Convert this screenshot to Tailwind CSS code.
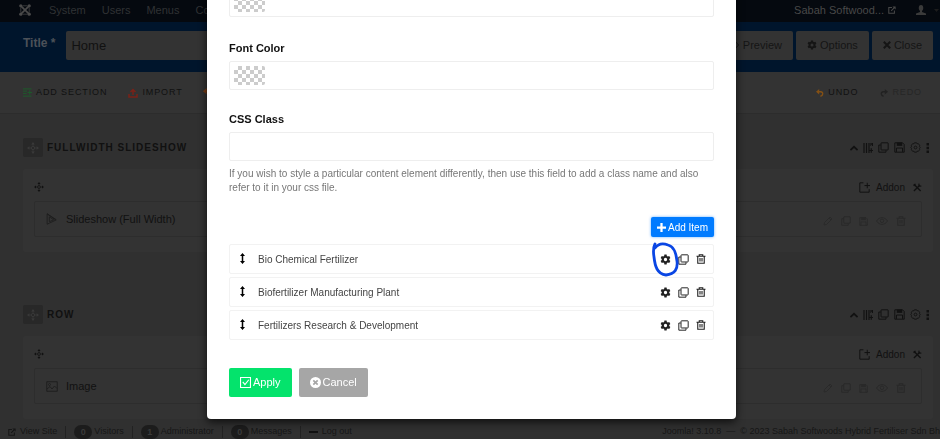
<!DOCTYPE html>
<html lang="en">
  <head>
    <meta charset="UTF-8" />
    <meta name="viewport" content="width=device-width, initial-scale=1.0" />
    <script src="https://cdn.jsdelivr.net/npm/@tailwindcss/browser@4"></script>
    <title>Page Builder - Edit Page</title>
  </head>
  <body
    class="h-screen overflow-hidden bg-[#303030] font-['Liberation_Sans',Arial,sans-serif] text-[10px] text-[#111]"
  >
    <!-- Icons -->
    <svg class="hidden">
      <symbol id="move" viewBox="0 0 20 20">
        <circle cx="10" cy="10" r="2.800" fill="none" stroke="currentColor" stroke-width="1.500" />
        <path stroke="currentColor" stroke-width="1.200" d="M10 7V3M10 17v-4M7 10H3M17 10h-4" />
        <path fill="currentColor" d="M10 0l3 4H7zM10 20l3-4H7zM0 10l4-3v6zM20 10l-4-3v6z" />
      </symbol>
      <symbol id="gear" viewBox="0 0 20 20">
        <path
          fill="currentColor"
          fill-rule="evenodd"
          d="M8 1h4l.5 2.600 1.800 1 2.500-.9 2 3.400-2 1.800v2.200l2 1.800-2 3.400-2.500-.9-1.800 1L12 19H8l-.5-2.600-1.800-1-2.500.9-2-3.400 2-1.800V8.900l-2-1.800 2-3.400 2.500.9 1.800-1zM10 7a3 3 0 100 6 3 3 0 000-6z"
        />
      </symbol>
      <symbol id="gear-line" viewBox="0 0 20 20">
        <g fill="none" stroke="currentColor" stroke-width="1.6">
          <path d="M8 1.500h4l1 1.800 2.200-.3 2.300 3-.3 2 1.300 2-1.300 2 .3 2-2.300 3-2.200-.3-1 1.800H8l-1-1.800-2.200.3-2.300-3 .3-2-1.300-2 1.300-2-.3-2 2.300-3 2.200.3z" />
          <circle cx="10" cy="10" r="2.500" />
        </g>
      </symbol>
      <symbol id="copy" viewBox="0 0 20 20">
        <g fill="none" stroke="currentColor" stroke-width="1.8">
          <rect x="5.500" y="1.500" width="13" height="13" rx="1" />
          <path d="M5 5.500H1.500v13h13V15" />
        </g>
      </symbol>
      <symbol id="trash" viewBox="0 0 20 20">
        <g fill="none" stroke="currentColor" stroke-width="2.200">
          <path d="M1 4.500h18M6.500 4V1.500h7V4M3.500 5v13.500h13V5M8 8v7M12 8v7" />
        </g>
      </symbol>
      <symbol id="save" viewBox="0 0 20 20">
        <path fill="none" stroke="currentColor" stroke-width="1.8" d="M1.500 1.500h14l3 3v14h-17zM4.500 18v-7h11v7" />
        <path fill="currentColor" d="M5 1h10v6H5z" />
      </symbol>
      <symbol id="cols" viewBox="0 0 20 20">
        <path fill="none" stroke="currentColor" stroke-width="2.400" d="M2 0v20M7 0v20M12 0v20M16 0v6M19 0v6M12 15h8M16.500 10.500v9" />
      </symbol>
      <symbol id="up" viewBox="0 0 20 20">
        <path fill="none" stroke="currentColor" stroke-width="4.500" d="M1 15l9-8 9 8" />
      </symbol>
      <symbol id="dots" viewBox="0 0 8 20">
        <path fill="currentColor" d="M1 0h5v5H1zM1 7.500h5v5H1zM1 15h5v5H1z" />
      </symbol>
      <symbol id="addon" viewBox="0 0 20 20">
        <path fill="none" stroke="currentColor" stroke-width="1.8" d="M8 1.500H1.500v17h17V13M10 6.500h10M15 1.500v10" />
      </symbol>
      <symbol id="tools" viewBox="0 0 20 20">
        <path fill="none" stroke="currentColor" stroke-width="3" d="M2 3l15 15M2 18L15 5" />
        <path fill="none" stroke="currentColor" stroke-width="2.600" d="M1.500 6.500l4-4.500M13 1.500l.5 5 5 .5" />
      </symbol>
      <symbol id="pencil" viewBox="0 0 20 20">
        <path fill="none" stroke="currentColor" stroke-width="1.800" d="M2 18l1-5L14 2l4 4L7 17zM12 4l4 4" />
      </symbol>
      <symbol id="eye" viewBox="0 0 24 20">
        <path fill="none" stroke="currentColor" stroke-width="2" d="M1 10c5-9 17-9 22 0-5 9-17 9-22 0z" />
        <circle cx="12" cy="9.500" r="3.500" fill="none" stroke="currentColor" stroke-width="2" />
      </symbol>
      <symbol id="external" viewBox="0 0 20 20">
        <path fill="none" stroke="currentColor" stroke-width="2.600" d="M10 4H2v14h14v-7M8 12l9-9" />
        <path fill="currentColor" d="M11 1h8v8z" />
      </symbol>
      <symbol id="undo" viewBox="0 0 20 20">
        <path fill="none" stroke="currentColor" stroke-width="3.500" d="M5 7h7c7 0 6 10-1 11" />
        <path fill="currentColor" d="M0 7l8-7v14z" />
      </symbol>
      <symbol id="drag" viewBox="0 0 10 22">
        <path fill="currentColor" d="M5 0l5 6H6.500v10H10l-5 6-5-6h3.500V6H0z" />
      </symbol>
    </svg>

    <!-- Top bar -->
    <nav class="flex h-[22px] items-center bg-[#05090f] pr-px pb-[2px] pl-[19px] text-[11px] text-[#303234]">
      <a href="#" aria-label="Joomla" class="mr-[18px]">
        <svg class="size-3 text-[#4a4a4a]" viewBox="0 0 20 20">
          <g fill="none" stroke="currentColor" stroke-width="2.800">
            <path d="M3 3l11 11M17 3L6 14M3 17L14 6M17 17L6 6" />
            <path d="M3 6v8M17 6v8M6 3h8M6 17h8" stroke-width="1.200" />
          </g>
          <g fill="currentColor">
            <circle cx="3" cy="3" r="2.700" />
            <circle cx="17" cy="3" r="2.700" />
            <circle cx="3" cy="17" r="2.700" />
            <circle cx="17" cy="17" r="2.700" />
          </g>
        </svg>
      </a>
      <div class="flex flex-1 gap-4">
        <a href="#">System</a>
        <a href="#">Users</a>
        <a href="#">Menus</a>
        <a href="#">Components</a>
      </div>
      <a href="#" class="flex items-center gap-1 text-[#484848]">
        Sabah Softwood...
        <svg class="size-2"><use href="#external" /></svg>
      </a>
      <button aria-label="User menu" class="ml-5 flex items-center gap-2 text-[#3a3a3a]">
        <svg class="size-[10px]" viewBox="0 0 20 20" fill="currentColor">
          <ellipse cx="10" cy="6" rx="4.500" ry="6" />
          <path d="M8 10h4v4l8 3v3H0v-3l8-3z" />
        </svg>
        <svg class="h-[3px] w-[5px] text-[#1c1c1c]" viewBox="0 0 10 6"><path fill="currentColor" d="M0 0h10L5 6z" /></svg>
      </button>
    </nav>

    <!-- Title bar -->
    <header class="flex h-[50px] items-center gap-[3px] bg-[#00152c] pr-[7px] pb-1 pl-[23px] text-[#151515]">
      <label for="title" class="mr-2 mb-1 text-xs font-bold text-[#4c5158]">Title *</label>
      <input id="title" value="Home" class="h-[29px] min-w-0 flex-1 rounded-xs bg-[#333] px-[5px] text-[13px] text-[#111]" />
      <button class="flex h-[29px] items-center gap-1 rounded-xs bg-[#333] px-[11px] text-[11px]">
        <svg class="h-[10px] w-3"><use href="#eye" /></svg>Preview
      </button>
      <button class="flex h-[29px] items-center gap-[3px] rounded-xs bg-[#333] px-[11px] text-[11px]">
        <svg class="size-[10px]"><use href="#gear" /></svg>Options
      </button>
      <button class="flex h-[29px] items-center gap-[3px] rounded-xs bg-[#333] px-[11px] text-[11px]">
        <svg class="size-2" viewBox="0 0 20 20"><path stroke="currentColor" stroke-width="5" d="M2 2l16 16M18 2L2 18" /></svg>Close
      </button>
    </header>

    <!-- Toolbar -->
    <div class="flex h-[42px] items-center border-b border-[#2c2c2c] bg-[#333] pr-[18px] pl-[23px] text-[9px] tracking-widest">
      <button class="flex items-center gap-1">
        <svg class="size-[9px] text-[#1d5a2a]" viewBox="0 0 20 20"><path stroke="currentColor" stroke-width="2.200" d="M0 2h19M0 7h9M0 12h8M0 18h19M10 10h10M15 5v10" /></svg>
        ADD SECTION
      </button>
      <button class="ml-[21px] flex items-center gap-1">
        <svg class="size-[10px] text-[#7a2218]" viewBox="0 0 20 20"><path fill="none" stroke="currentColor" stroke-width="3" d="M2 12v6h16v-6M10 14V4M5 8l5-5 5 5" /></svg>
        IMPORT
      </button>
      <button class="ml-[20px] flex items-center gap-1">
        <svg class="size-[9px] text-[#7a3d14]"><use href="#undo" /></svg>
        EXPORT
      </button>
      <button class="ml-auto flex items-center gap-1">
        <svg class="size-2 text-[#845014]"><use href="#undo" /></svg>
        UNDO
      </button>
      <button class="ml-[22px] flex items-center gap-1 text-[#262626]">
        <svg class="size-2 -scale-x-100 text-[#222]"><use href="#undo" /></svg>
        REDO
      </button>
    </div>

    <!-- Builder rows -->
    <main class="flex flex-col gap-[53px] pt-6 pr-[7px] pl-[23px]">
      <section>
        <div class="flex h-[19px] items-center">
          <span class="flex h-[19px] w-5 items-center justify-center rounded-xs bg-[#282828] text-[#3a3a3a]">
            <svg class="size-3"><use href="#move" /></svg>
          </span>
          <h2 class="ml-1 text-[10px] font-bold tracking-widest">FULLWIDTH SLIDESHOW</h2>
          <div class="ml-auto flex items-center gap-[5px] pr-[3px]">
            <button aria-label="Collapse"><svg class="size-2"><use href="#up" /></svg></button>
            <button aria-label="Columns"><svg class="size-[10px]"><use href="#cols" /></svg></button>
            <button aria-label="Duplicate"><svg class="size-[11px]"><use href="#copy" /></svg></button>
            <button aria-label="Save"><svg class="size-[11px]"><use href="#save" /></svg></button>
            <button aria-label="Settings"><svg class="size-[11px]"><use href="#gear-line" /></svg></button>
            <button aria-label="More"><svg class="h-[10px] w-1"><use href="#dots" /></svg></button>
          </div>
        </div>
        <div class="mt-3 rounded-xs bg-[#333] px-[11px] pb-[15px]">
          <div class="flex h-8 items-center pt-1">
            <svg class="size-[10px]"><use href="#move" /></svg>
            <button class="ml-auto flex items-center gap-[6px]">
              <svg class="size-[11px]"><use href="#addon" /></svg>Addon
            </button>
            <button aria-label="Tools" class="ml-2"><svg class="size-[9px]"><use href="#tools" /></svg></button>
          </div>
          <div class="flex h-9 items-center rounded-xs border border-[#2d2d2d] pr-[15px] pl-[11px]">
            <svg class="h-3 w-[11px] text-[#1d1d1d]" viewBox="0 0 20 22">
              <path fill="none" stroke="currentColor" stroke-width="1.600" d="M2 1.500v19L18 13zM6 7v9l8-3.500zM2 1.500l17 11" />
            </svg>
            <span class="ml-[9px] text-[11px]">Slideshow (Full Width)</span>
            <div class="ml-auto flex items-center gap-2 pt-1 text-[#292929]">
              <svg class="size-[10px]"><use href="#pencil" /></svg>
              <svg class="size-[10px]"><use href="#copy" /></svg>
              <svg class="size-[9px]"><use href="#save" /></svg>
              <svg class="h-[10px] w-3"><use href="#eye" /></svg>
              <svg class="size-[10px]"><use href="#trash" /></svg>
            </div>
          </div>
        </div>
      </section>

      <section>
        <div class="flex h-[19px] items-center">
          <span class="flex h-[19px] w-5 items-center justify-center rounded-xs bg-[#282828] text-[#3a3a3a]">
            <svg class="size-3"><use href="#move" /></svg>
          </span>
          <h2 class="ml-1 text-[10px] font-bold tracking-widest">ROW</h2>
          <div class="ml-auto flex items-center gap-[5px] pr-[3px]">
            <button aria-label="Collapse"><svg class="size-2"><use href="#up" /></svg></button>
            <button aria-label="Columns"><svg class="size-[10px]"><use href="#cols" /></svg></button>
            <button aria-label="Duplicate"><svg class="size-[11px]"><use href="#copy" /></svg></button>
            <button aria-label="Save"><svg class="size-[11px]"><use href="#save" /></svg></button>
            <button aria-label="Settings"><svg class="size-[11px]"><use href="#gear-line" /></svg></button>
            <button aria-label="More"><svg class="h-[10px] w-1"><use href="#dots" /></svg></button>
          </div>
        </div>
        <div class="mt-3 rounded-xs bg-[#333] px-[11px] pb-[15px]">
          <div class="flex h-8 items-center pt-1">
            <svg class="size-[10px]"><use href="#move" /></svg>
            <button class="ml-auto flex items-center gap-[6px]">
              <svg class="size-[11px]"><use href="#addon" /></svg>Addon
            </button>
            <button aria-label="Tools" class="ml-2"><svg class="size-[9px]"><use href="#tools" /></svg></button>
          </div>
          <div class="flex h-9 items-center rounded-xs border border-[#2d2d2d] pr-[15px] pl-[11px]">
            <svg class="h-[11px] w-3 text-[#1d1d1d]" viewBox="0 0 24 22">
              <path fill="none" stroke="currentColor" stroke-width="1.800" d="M1.500 1.500h21v19h-21zM2 16l6-5 4 5 5-6 5 5" />
              <circle cx="7" cy="7" r="2" fill="none" stroke="currentColor" stroke-width="1.600" />
            </svg>
            <span class="ml-2 text-[11px]">Image</span>
            <div class="ml-auto flex items-center gap-2 pt-1 text-[#292929]">
              <svg class="size-[10px]"><use href="#pencil" /></svg>
              <svg class="size-[10px]"><use href="#copy" /></svg>
              <svg class="size-[9px]"><use href="#save" /></svg>
              <svg class="h-[10px] w-3"><use href="#eye" /></svg>
              <svg class="size-[10px]"><use href="#trash" /></svg>
            </div>
          </div>
        </div>
      </section>
    </main>

    <!-- Status bar -->
    <footer class="fixed inset-x-0 bottom-0 flex h-[17px] items-center gap-2 bg-[#303030] pt-[3px] pl-2 text-[9px] whitespace-nowrap text-[#161616]">
      <a href="#" class="flex items-center gap-1"><svg class="size-2"><use href="#external" /></svg>View Site</a>
      <span class="h-3 w-px bg-[#222]"></span>
      <span class="flex items-center gap-[2px]"><b class="w-[18px] rounded-full bg-[#1c1c1c] text-center leading-[14px] text-[#3a3a3a]">0</b>Visitors</span>
      <span class="h-3 w-px bg-[#222]"></span>
      <span class="flex items-center gap-[2px]"><b class="w-[18px] rounded-full bg-[#1c1c1c] text-center leading-[14px] text-[#3a3a3a]">1</b>Administrator</span>
      <span class="h-3 w-px bg-[#222]"></span>
      <a href="#" class="flex items-center gap-[2px]"><b class="w-[18px] rounded-full bg-[#1c1c1c] text-center leading-[14px] text-[#3a3a3a]">0</b>Messages</a>
      <span class="h-3 w-px bg-[#222]"></span>
      <a href="#" class="flex items-center gap-1"><i class="h-[2px] w-[9px] bg-[#111]"></i>Log out</a>
      <span class="ml-auto">Joomla! 3.10.8 &nbsp;—&nbsp; © 2023 Sabah Softwoods Hybrid Fertiliser Sdn Bh</span>
    </footer>

    <!-- Item settings modal -->
    <div class="fixed inset-0 flex items-start justify-center pl-[3px]">
      <div role="dialog" class="-mt-8 w-full max-w-[529px] rounded-sm bg-white px-[22px] pt-5 pb-[22px] text-[#555] shadow-[0_3px_8px_rgba(0,0,0,0.7)]">
        <div class="flex h-[29px] items-center rounded-xs border border-[#eee] px-1">
          <button aria-label="Choose background colour" class="h-[19px] w-[31px] rounded-xs bg-[repeating-conic-gradient(#ccc_0_25%,#fff_0_50%)] bg-size-[8px_8px]"></button>
          <input aria-label="Background Color" class="min-w-0 flex-1 outline-none" />
        </div>

        <label for="font-color" class="mt-[23px] block text-[11px] leading-4 font-bold text-[#111]">Font Color</label>
        <div class="mt-[5px] flex h-[29px] items-center rounded-xs border border-[#eee] px-1">
          <button aria-label="Choose font colour" class="h-[19px] w-[31px] rounded-xs bg-[repeating-conic-gradient(#ccc_0_25%,#fff_0_50%)] bg-size-[8px_8px]"></button>
          <input id="font-color" class="min-w-0 flex-1 outline-none" />
        </div>

        <label for="css-class" class="mt-[21px] block text-[11px] leading-4 font-bold text-[#111]">CSS Class</label>
        <input id="css-class" class="mt-[5px] block h-[29px] w-full rounded-xs border border-[#eee] px-2 outline-none" />
        <p class="mt-[6px] leading-[14px] text-[#777]">
          If you wish to style a particular content element differently, then use this field to add a class name and also
          <br />refer to it in your css file.
        </p>

        <div class="mt-[22px] flex justify-end">
          <button class="flex h-5 items-center gap-[2px] rounded-xs bg-[#007bff] px-[6px] text-[10px] text-white shadow-[0_0_3px_#007bff99]">
            <svg class="size-[9px]" viewBox="0 0 20 20"><path stroke="currentColor" stroke-width="5" d="M10 0v20M0 10h20" /></svg>
            Add Item
          </button>
        </div>

        <ul class="mt-[7px] flex flex-col gap-[3px] text-[#444]">
          <li class="flex h-[30px] items-center rounded-xs border border-[#f2f2f2] pr-[7px] pl-[10px]">
            <svg class="mb-[2px] h-[11px] w-[5px] text-black"><use href="#drag" /></svg>
            <span class="ml-[13px]">Bio Chemical Fertilizer</span>
            <div class="relative ml-auto flex items-center gap-[7px] text-[#222]">
              <button aria-label="Edit"><svg class="size-[11px]"><use href="#gear" /></svg></button>
              <button aria-label="Duplicate"><svg class="size-[11px]"><use href="#copy" /></svg></button>
              <button aria-label="Delete"><svg class="size-[10px]"><use href="#trash" /></svg></button>
              <!-- pen mark round the settings button -->
              <svg class="pointer-events-none absolute -top-3 -left-[9px] h-9 w-7" viewBox="0 0 28 36">
                <path
                  d="M4 2C2 6 2 9 3 15C4 24 6 32 15 33C24 32 27 27 26 19C25 10 22 4 17 3C12 1 7 2 4 6"
                  fill="none"
                  stroke="#0a46e4"
                  stroke-width="2.800"
                  stroke-linecap="round"
                />
              </svg>
            </div>
          </li>
          <li class="flex h-[30px] items-center rounded-xs border border-[#f2f2f2] pr-[7px] pl-[10px]">
            <svg class="mb-[2px] h-[11px] w-[5px] text-black"><use href="#drag" /></svg>
            <span class="ml-[13px]">Biofertilizer Manufacturing Plant</span>
            <div class="ml-auto flex items-center gap-[7px] text-[#222]">
              <button aria-label="Edit"><svg class="size-[11px]"><use href="#gear" /></svg></button>
              <button aria-label="Duplicate"><svg class="size-[11px]"><use href="#copy" /></svg></button>
              <button aria-label="Delete"><svg class="size-[10px]"><use href="#trash" /></svg></button>
            </div>
          </li>
          <li class="flex h-[30px] items-center rounded-xs border border-[#f2f2f2] pr-[7px] pl-[10px]">
            <svg class="mb-[2px] h-[11px] w-[5px] text-black"><use href="#drag" /></svg>
            <span class="ml-[13px]">Fertilizers Research &amp; Development</span>
            <div class="ml-auto flex items-center gap-[7px] text-[#222]">
              <button aria-label="Edit"><svg class="size-[11px]"><use href="#gear" /></svg></button>
              <button aria-label="Duplicate"><svg class="size-[11px]"><use href="#copy" /></svg></button>
              <button aria-label="Delete"><svg class="size-[10px]"><use href="#trash" /></svg></button>
            </div>
          </li>
        </ul>

        <div class="mt-7 flex gap-[7px] text-[11px] text-white">
          <button class="flex h-[29px] items-center gap-[2px] rounded-xs bg-[#04e36c] px-[11px]">
            <svg class="size-[11px]" viewBox="0 0 20 20"><path fill="none" stroke="currentColor" stroke-width="2" d="M1 1h18v18H1zM5 9l4 5 7-9" /></svg>
            Apply
          </button>
          <button class="flex h-[29px] items-center gap-[2px] rounded-xs bg-[#a6a6a6] px-[11px]">
            <svg class="size-[11px]" viewBox="0 0 20 20">
              <circle cx="10" cy="10" r="10" fill="currentColor" />
              <path stroke="#a6a6a6" stroke-width="3" d="M6 6l8 8M14 6l-8 8" />
            </svg>
            Cancel
          </button>
        </div>
      </div>
    </div>
  </body>
</html>
